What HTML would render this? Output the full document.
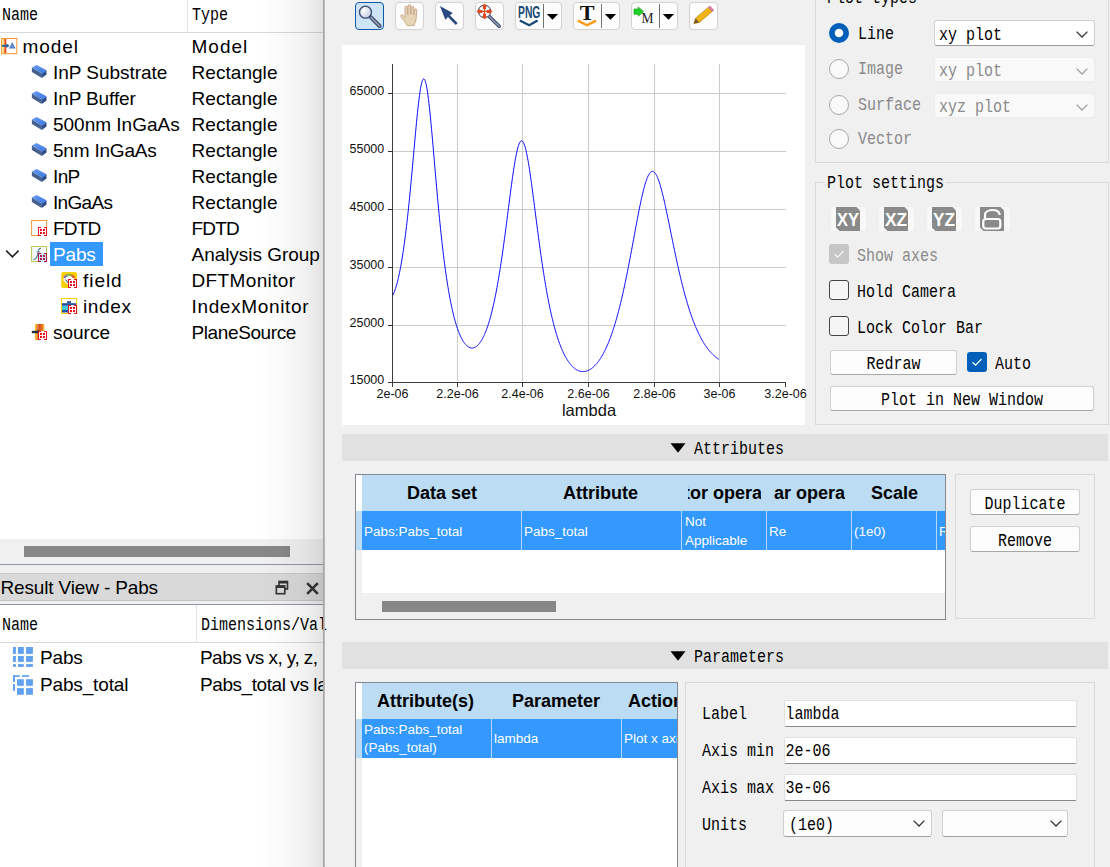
<!DOCTYPE html><html><head><meta charset="utf-8"><style>
html,body{margin:0;padding:0;}
body{width:1110px;height:867px;overflow:hidden;position:relative;background:#f0f0f0;}
.a{position:absolute;box-sizing:border-box;}
.t{white-space:pre;}
svg{position:absolute;overflow:visible;}
</style></head><body>
<div class="a" style="left:0px;top:0px;width:323px;height:539px;background:#fff"></div>
<div class="a" style="left:0px;top:32px;width:323px;height:1px;background:#d9d9d9"></div>
<div class="a" style="left:187px;top:0px;width:1px;height:32px;background:#e3e3e3"></div>
<div class="a t" style="left:2px;top:8.50px;font-family:'Liberation Mono', monospace;font-size:15px;line-height:15px;color:#000;transform:scaleY(1.18);transform-origin:0 11.50px;">Name</div>
<div class="a t" style="left:192px;top:8.50px;font-family:'Liberation Mono', monospace;font-size:15px;line-height:15px;color:#000;transform:scaleY(1.18);transform-origin:0 11.50px;">Type</div>
<div class="a t" style="left:22.5px;top:36.52px;font-family:'Liberation Sans', sans-serif;font-size:19px;line-height:19px;color:#000;letter-spacing:0.9px;">model</div>
<div class="a t" style="left:191.5px;top:36.52px;font-family:'Liberation Sans', sans-serif;font-size:19px;line-height:19px;color:#000;letter-spacing:0.9999999999999999px;">Model</div>
<svg style="left:1px;top:38px" width="16" height="16" viewBox="0 0 16 16"><rect x="0.6" y="0.5" width="15.2" height="15.2" fill="#fff" stroke="#f5962e" stroke-width="1"/><rect x="1.6" y="1" width="2" height="14.2" fill="#ffd86a"/><rect x="3.4" y="1" width="1.9" height="14.2" fill="#f0441a"/><path d="M1 7.8 L6.5 7.8" stroke="#1f5f9e" stroke-width="1.8"/><path d="M5.5 5.6 L8.6 7.8 L5.5 10Z" fill="#1f5f9e"/><path d="M7.9 10.4 L11.3 4 L14.7 10.4Z" fill="#5b86c8"/></svg>
<div class="a t" style="left:53px;top:62.52px;font-family:'Liberation Sans', sans-serif;font-size:19px;line-height:19px;color:#000;letter-spacing:-0.04166666666666666px;">InP Substrate</div>
<div class="a t" style="left:191.5px;top:62.52px;font-family:'Liberation Sans', sans-serif;font-size:19px;line-height:19px;color:#000;letter-spacing:0.05000000000000002px;">Rectangle</div>
<svg style="left:31px;top:64px" width="16" height="16" viewBox="0 0 16 16"><defs><linearGradient id="rtop" x1="0" y1="0" x2="1" y2="1"><stop offset="0" stop-color="#6a9cf2"/><stop offset="1" stop-color="#3a76e0"/></linearGradient></defs><path d="M0.9 3.5 L10.8 9.6 L10.8 13.9 L0.9 7.9 Z" fill="#46608f"/><path d="M10.8 9.6 L15.5 6.2 L15.5 10.4 L10.8 13.9 Z" fill="#2c4c8c"/><path d="M0.9 3.5 L5.6 1 L15.5 6.2 L10.8 9.6 Z" fill="url(#rtop)"/></svg>
<div class="a t" style="left:53px;top:88.52px;font-family:'Liberation Sans', sans-serif;font-size:19px;line-height:19px;color:#000;letter-spacing:-0.10555555555555554px;">InP Buffer</div>
<div class="a t" style="left:191.5px;top:88.52px;font-family:'Liberation Sans', sans-serif;font-size:19px;line-height:19px;color:#000;letter-spacing:0.05000000000000002px;">Rectangle</div>
<svg style="left:31px;top:90px" width="16" height="16" viewBox="0 0 16 16"><defs><linearGradient id="rtop" x1="0" y1="0" x2="1" y2="1"><stop offset="0" stop-color="#6a9cf2"/><stop offset="1" stop-color="#3a76e0"/></linearGradient></defs><path d="M0.9 3.5 L10.8 9.6 L10.8 13.9 L0.9 7.9 Z" fill="#46608f"/><path d="M10.8 9.6 L15.5 6.2 L15.5 10.4 L10.8 13.9 Z" fill="#2c4c8c"/><path d="M0.9 3.5 L5.6 1 L15.5 6.2 L10.8 9.6 Z" fill="url(#rtop)"/></svg>
<div class="a t" style="left:53px;top:114.52px;font-family:'Liberation Sans', sans-serif;font-size:19px;line-height:19px;color:#000;letter-spacing:-0.004545454545454519px;">500nm InGaAs</div>
<div class="a t" style="left:191.5px;top:114.52px;font-family:'Liberation Sans', sans-serif;font-size:19px;line-height:19px;color:#000;letter-spacing:0.05000000000000002px;">Rectangle</div>
<svg style="left:31px;top:116px" width="16" height="16" viewBox="0 0 16 16"><defs><linearGradient id="rtop" x1="0" y1="0" x2="1" y2="1"><stop offset="0" stop-color="#6a9cf2"/><stop offset="1" stop-color="#3a76e0"/></linearGradient></defs><path d="M0.9 3.5 L10.8 9.6 L10.8 13.9 L0.9 7.9 Z" fill="#46608f"/><path d="M10.8 9.6 L15.5 6.2 L15.5 10.4 L10.8 13.9 Z" fill="#2c4c8c"/><path d="M0.9 3.5 L5.6 1 L15.5 6.2 L10.8 9.6 Z" fill="url(#rtop)"/></svg>
<div class="a t" style="left:53px;top:140.52px;font-family:'Liberation Sans', sans-serif;font-size:19px;line-height:19px;color:#000;letter-spacing:-0.20555555555555555px;">5nm InGaAs</div>
<div class="a t" style="left:191.5px;top:140.52px;font-family:'Liberation Sans', sans-serif;font-size:19px;line-height:19px;color:#000;letter-spacing:0.05000000000000002px;">Rectangle</div>
<svg style="left:31px;top:142px" width="16" height="16" viewBox="0 0 16 16"><defs><linearGradient id="rtop" x1="0" y1="0" x2="1" y2="1"><stop offset="0" stop-color="#6a9cf2"/><stop offset="1" stop-color="#3a76e0"/></linearGradient></defs><path d="M0.9 3.5 L10.8 9.6 L10.8 13.9 L0.9 7.9 Z" fill="#46608f"/><path d="M10.8 9.6 L15.5 6.2 L15.5 10.4 L10.8 13.9 Z" fill="#2c4c8c"/><path d="M0.9 3.5 L5.6 1 L15.5 6.2 L10.8 9.6 Z" fill="url(#rtop)"/></svg>
<div class="a t" style="left:53px;top:166.52px;font-family:'Liberation Sans', sans-serif;font-size:19px;line-height:19px;color:#000;letter-spacing:-0.65px;">InP</div>
<div class="a t" style="left:191.5px;top:166.52px;font-family:'Liberation Sans', sans-serif;font-size:19px;line-height:19px;color:#000;letter-spacing:0.05000000000000002px;">Rectangle</div>
<svg style="left:31px;top:168px" width="16" height="16" viewBox="0 0 16 16"><defs><linearGradient id="rtop" x1="0" y1="0" x2="1" y2="1"><stop offset="0" stop-color="#6a9cf2"/><stop offset="1" stop-color="#3a76e0"/></linearGradient></defs><path d="M0.9 3.5 L10.8 9.6 L10.8 13.9 L0.9 7.9 Z" fill="#46608f"/><path d="M10.8 9.6 L15.5 6.2 L15.5 10.4 L10.8 13.9 Z" fill="#2c4c8c"/><path d="M0.9 3.5 L5.6 1 L15.5 6.2 L10.8 9.6 Z" fill="url(#rtop)"/></svg>
<div class="a t" style="left:53px;top:192.52px;font-family:'Liberation Sans', sans-serif;font-size:19px;line-height:19px;color:#000;letter-spacing:-0.67px;">InGaAs</div>
<div class="a t" style="left:191.5px;top:192.52px;font-family:'Liberation Sans', sans-serif;font-size:19px;line-height:19px;color:#000;letter-spacing:0.05000000000000002px;">Rectangle</div>
<svg style="left:31px;top:194px" width="16" height="16" viewBox="0 0 16 16"><defs><linearGradient id="rtop" x1="0" y1="0" x2="1" y2="1"><stop offset="0" stop-color="#6a9cf2"/><stop offset="1" stop-color="#3a76e0"/></linearGradient></defs><path d="M0.9 3.5 L10.8 9.6 L10.8 13.9 L0.9 7.9 Z" fill="#46608f"/><path d="M10.8 9.6 L15.5 6.2 L15.5 10.4 L10.8 13.9 Z" fill="#2c4c8c"/><path d="M0.9 3.5 L5.6 1 L15.5 6.2 L10.8 9.6 Z" fill="url(#rtop)"/></svg>
<div class="a t" style="left:53px;top:218.52px;font-family:'Liberation Sans', sans-serif;font-size:19px;line-height:19px;color:#000;letter-spacing:-0.8166666666666667px;">FDTD</div>
<div class="a t" style="left:191.5px;top:218.52px;font-family:'Liberation Sans', sans-serif;font-size:19px;line-height:19px;color:#000;letter-spacing:-0.8166666666666667px;">FDTD</div>
<svg style="left:31px;top:220px" width="16" height="16" viewBox="0 0 16 16"><rect x="0.6" y="0.5" width="15" height="15" fill="#fff" stroke="#ff9838" stroke-width="1"/><g shape-rendering="crispEdges"><rect x="7" y="7" width="9" height="9" fill="#fff"/><rect x="7" y="7" width="1" height="9" fill="#e8101e"/><rect x="7" y="7" width="3" height="1" fill="#e8101e"/><rect x="7" y="15" width="3" height="1" fill="#e8101e"/><rect x="15" y="7" width="1" height="9" fill="#e8101e"/><rect x="13" y="7" width="3" height="1" fill="#e8101e"/><rect x="13" y="15" width="3" height="1" fill="#e8101e"/><rect x="9" y="9" width="2" height="2" fill="#e8101e"/><rect x="12" y="9" width="2" height="2" fill="#e8101e"/><rect x="9" y="12" width="2" height="2" fill="#e8101e"/><rect x="12" y="12" width="2" height="2" fill="#e8101e"/></g></svg>
<div class="a" style="left:50px;top:242px;width:53px;height:24px;background:#3399ff"></div>
<div class="a t" style="left:53px;top:244.52px;font-family:'Liberation Sans', sans-serif;font-size:19px;line-height:19px;color:#fff;letter-spacing:-0.15px;">Pabs</div>
<div class="a t" style="left:191.5px;top:244.52px;font-family:'Liberation Sans', sans-serif;font-size:19px;line-height:19px;color:#000;letter-spacing:-0.04230769230769231px;">Analysis Group</div>
<svg style="left:31px;top:246px" width="16" height="16" viewBox="0 0 16 16"><rect x="0.6" y="0.6" width="15" height="14.8" fill="#fff" stroke="#b8c048" stroke-width="1"/><path d="M10 2.6 C8.2 1.8 7.4 3.5 7 6.5 C6.5 10 6 13.2 2.5 13.6" fill="none" stroke="#5a7ea4" stroke-width="1.1"/><path d="M5.5 6 L9.5 6" stroke="#5a7ea4" stroke-width="0.9"/><g shape-rendering="crispEdges"><rect x="7" y="7" width="9" height="9" fill="#c6e4fa"/><rect x="7" y="7" width="1" height="9" fill="#b01c40"/><rect x="7" y="7" width="3" height="1" fill="#b01c40"/><rect x="7" y="15" width="3" height="1" fill="#b01c40"/><rect x="15" y="7" width="1" height="9" fill="#b01c40"/><rect x="13" y="7" width="3" height="1" fill="#b01c40"/><rect x="13" y="15" width="3" height="1" fill="#b01c40"/><rect x="9" y="9" width="2" height="2" fill="#b01c40"/><rect x="12" y="9" width="2" height="2" fill="#b01c40"/><rect x="9" y="12" width="2" height="2" fill="#b01c40"/><rect x="12" y="12" width="2" height="2" fill="#b01c40"/></g></svg>
<div class="a t" style="left:83px;top:270.52px;font-family:'Liberation Sans', sans-serif;font-size:19px;line-height:19px;color:#000;letter-spacing:0.9500000000000001px;">field</div>
<div class="a t" style="left:191.5px;top:270.52px;font-family:'Liberation Sans', sans-serif;font-size:19px;line-height:19px;color:#000;letter-spacing:0.36111111111111105px;">DFTMonitor</div>
<svg style="left:61px;top:272px" width="16" height="16" viewBox="0 0 16 16"><defs><linearGradient id="rb" x1="0" x2="1"><stop offset="0" stop-color="#8a5cd0"/><stop offset="0.5" stop-color="#8ad040"/><stop offset="1" stop-color="#f04020"/></linearGradient></defs><rect x="0.2" y="0" width="15.8" height="16" rx="2" fill="#ffd000"/><path d="M2.2 8.5 A6 6 0 0 1 14.2 8.5 L10 12 L6 12 Z" fill="#fff"/><path d="M3.2 6 A5.5 5.5 0 0 1 13.2 6" fill="none" stroke="url(#rb)" stroke-width="2.2"/><path d="M4.5 7.5 L8 12" stroke="#334" stroke-width="1"/><g shape-rendering="crispEdges"><rect x="7" y="7" width="9" height="9" fill="#fff"/><rect x="7" y="7" width="1" height="9" fill="#e8101e"/><rect x="7" y="7" width="3" height="1" fill="#e8101e"/><rect x="7" y="15" width="3" height="1" fill="#e8101e"/><rect x="15" y="7" width="1" height="9" fill="#e8101e"/><rect x="13" y="7" width="3" height="1" fill="#e8101e"/><rect x="13" y="15" width="3" height="1" fill="#e8101e"/><rect x="9" y="9" width="2" height="2" fill="#e8101e"/><rect x="12" y="9" width="2" height="2" fill="#e8101e"/><rect x="9" y="12" width="2" height="2" fill="#e8101e"/><rect x="12" y="12" width="2" height="2" fill="#e8101e"/></g></svg>
<div class="a t" style="left:83px;top:296.52px;font-family:'Liberation Sans', sans-serif;font-size:19px;line-height:19px;color:#000;letter-spacing:0.65px;">index</div>
<div class="a t" style="left:191.5px;top:296.52px;font-family:'Liberation Sans', sans-serif;font-size:19px;line-height:19px;color:#000;letter-spacing:0.65px;">IndexMonitor</div>
<svg style="left:61px;top:298px" width="16" height="16" viewBox="0 0 16 16"><rect x="0.5" y="0.5" width="15.2" height="15" fill="#fff" stroke="#ffd000" stroke-width="1"/><rect x="1" y="5.2" width="14.2" height="2.6" fill="#2850a0"/><rect x="1" y="7.8" width="14.2" height="4.1" fill="#3cc8d4"/><rect x="1" y="11.9" width="14.2" height="2.6" fill="#2850a0"/><rect x="6" y="3.2" width="4" height="2" fill="#2850a0"/><g shape-rendering="crispEdges"><rect x="7" y="7" width="9" height="9" fill="#fff"/><rect x="7" y="7" width="1" height="9" fill="#e8101e"/><rect x="7" y="7" width="3" height="1" fill="#e8101e"/><rect x="7" y="15" width="3" height="1" fill="#e8101e"/><rect x="15" y="7" width="1" height="9" fill="#e8101e"/><rect x="13" y="7" width="3" height="1" fill="#e8101e"/><rect x="13" y="15" width="3" height="1" fill="#e8101e"/><rect x="9" y="9" width="2" height="2" fill="#e8101e"/><rect x="12" y="9" width="2" height="2" fill="#e8101e"/><rect x="9" y="12" width="2" height="2" fill="#e8101e"/><rect x="12" y="12" width="2" height="2" fill="#e8101e"/></g></svg>
<div class="a t" style="left:53px;top:322.52px;font-family:'Liberation Sans', sans-serif;font-size:19px;line-height:19px;color:#000;letter-spacing:-0.010000000000000009px;">source</div>
<div class="a t" style="left:191.5px;top:322.52px;font-family:'Liberation Sans', sans-serif;font-size:19px;line-height:19px;color:#000;letter-spacing:-0.39px;">PlaneSource</div>
<svg style="left:31px;top:324px" width="16" height="16" viewBox="0 0 16 16"><defs><linearGradient id="sg" x1="0" x2="1"><stop offset="0" stop-color="#ffd020"/><stop offset="0.25" stop-color="#e88a40"/><stop offset="0.5" stop-color="#d85018"/><stop offset="0.8" stop-color="#e87a30"/><stop offset="1" stop-color="#ffd020"/></linearGradient></defs><rect x="3.9" y="0" width="9.4" height="16" fill="url(#sg)"/><path d="M0.8 8 L8 8" stroke="#223040" stroke-width="2.4"/><path d="M6.5 5.5 L9.5 7.5 L6.5 9.5Z" fill="#223040"/><g shape-rendering="crispEdges"><rect x="7" y="7" width="9" height="9" fill="#fff"/><rect x="7" y="7" width="1" height="9" fill="#e8101e"/><rect x="7" y="7" width="3" height="1" fill="#e8101e"/><rect x="7" y="15" width="3" height="1" fill="#e8101e"/><rect x="15" y="7" width="1" height="9" fill="#e8101e"/><rect x="13" y="7" width="3" height="1" fill="#e8101e"/><rect x="13" y="15" width="3" height="1" fill="#e8101e"/><rect x="9" y="9" width="2" height="2" fill="#e8101e"/><rect x="12" y="9" width="2" height="2" fill="#e8101e"/><rect x="9" y="12" width="2" height="2" fill="#e8101e"/><rect x="12" y="12" width="2" height="2" fill="#e8101e"/></g></svg>
<svg style="left:5px;top:249px" width="15" height="10" viewBox="0 0 15 10"><path d="M1.2 1.6 L7.4 7.8 L13.6 1.6" fill="none" stroke="#222" stroke-width="1.6"/></svg>
<div class="a" style="left:0px;top:539px;width:323px;height:25px;background:#f0f0f0"></div>
<div class="a" style="left:24px;top:546px;width:266px;height:11px;background:#878787"></div>
<div class="a" style="left:0px;top:564px;width:323px;height:1px;background:#8d97a3"></div>
<div class="a" style="left:0px;top:565px;width:323px;height:8px;background:#f0f0f0"></div>
<div class="a" style="left:0px;top:573px;width:323px;height:1px;background:#cacaca"></div>
<div class="a" style="left:0px;top:574px;width:323px;height:26px;background:#d9d9d9"></div>
<div class="a" style="left:0px;top:600px;width:323px;height:1px;background:#c4c4c4"></div>
<div class="a" style="left:0px;top:601px;width:323px;height:3px;background:#f0f0f0"></div>
<div class="a" style="left:0px;top:604px;width:323px;height:1px;background:#8d97a3"></div>
<div class="a t" style="left:0.5px;top:578.32px;font-family:'Liberation Sans', sans-serif;font-size:19px;line-height:19px;color:#000;letter-spacing:-0.15px;">Result View - Pabs</div>
<svg style="left:275px;top:580px" width="14" height="15" viewBox="0 0 14 15"><rect x="4" y="1.5" width="8.5" height="7.5" fill="none" stroke="#333" stroke-width="1.6"/><rect x="4" y="1" width="9" height="2.5" fill="#333"/><rect x="1.3" y="6" width="8.5" height="7.7" fill="#d9d9d9" stroke="#333" stroke-width="1.6"/><rect x="1" y="5.5" width="9" height="2.5" fill="#333"/></svg>
<svg style="left:306px;top:582px" width="13" height="13" viewBox="0 0 13 13"><path d="M1.2 1.2 L11.8 11.8 M11.8 1.2 L1.2 11.8" stroke="#333" stroke-width="2.5"/></svg>
<div class="a" style="left:0px;top:605px;width:323px;height:262px;background:#fff"></div>
<div class="a" style="left:0px;top:642px;width:323px;height:1px;background:#d9d9d9"></div>
<div class="a" style="left:196px;top:605px;width:1px;height:37px;background:#e3e3e3"></div>
<div class="a t" style="left:2px;top:618.50px;font-family:'Liberation Mono', monospace;font-size:15px;line-height:15px;color:#000;transform:scaleY(1.18);transform-origin:0 11.50px;">Name</div>
<div class="a t" style="left:201px;top:618.50px;font-family:'Liberation Mono', monospace;font-size:15px;line-height:15px;color:#000;transform:scaleY(1.18);transform-origin:0 11.50px;">Dimensions/Val</div>
<div class="a t" style="left:40px;top:647.52px;font-family:'Liberation Sans', sans-serif;font-size:19px;line-height:19px;color:#000;letter-spacing:-0.15px;">Pabs</div>
<div class="a" style="left:0px;top:647.52px;width:323px;height:30.4px;overflow:hidden"><div class="a t" style="left:200px;top:0px;font-family:'Liberation Sans', sans-serif;font-size:19px;line-height:19px;color:#000;letter-spacing:-0.55px;">Pabs vs x, y, z, lambda</div></div>
<div class="a t" style="left:40px;top:675.22px;font-family:'Liberation Sans', sans-serif;font-size:19px;line-height:19px;color:#000;letter-spacing:-0.15px;">Pabs_total</div>
<div class="a" style="left:0px;top:675.22px;width:323px;height:30.4px;overflow:hidden"><div class="a t" style="left:200px;top:0px;font-family:'Liberation Sans', sans-serif;font-size:19px;line-height:19px;color:#000;letter-spacing:-0.42894736842105263px;">Pabs_total vs lambda</div></div>
<svg style="left:13px;top:647px" width="20" height="20" viewBox="0 0 20 20"><rect x="0" y="0" width="2.9" height="6.9" fill="#62a0f0"/><rect x="0" y="9" width="2.9" height="5.9" fill="#62a0f0"/><rect x="0" y="17.1" width="2.9" height="2.8" fill="#62a0f0"/><rect x="5" y="0" width="5.8" height="6.9" fill="#62a0f0"/><rect x="5" y="9" width="5.8" height="5.9" fill="#62a0f0"/><rect x="5" y="17.1" width="5.8" height="2.8" fill="#62a0f0"/><rect x="13.1" y="0" width="6.8" height="6.9" fill="#62a0f0"/><rect x="13.1" y="9" width="6.8" height="5.9" fill="#62a0f0"/><rect x="13.1" y="17.1" width="6.8" height="2.8" fill="#62a0f0"/></svg>
<svg style="left:13px;top:675px" width="20" height="20" viewBox="0 0 20 20"><rect x="0" y="0.2" width="6.9" height="1.7" fill="#62a0f0"/><rect x="9" y="0.2" width="7" height="1.7" fill="#62a0f0"/><rect x="0" y="0.2" width="2" height="6.7" fill="#62a0f0"/><rect x="0" y="9.1" width="2" height="6.8" fill="#62a0f0"/><rect x="4" y="4.2" width="6.8" height="6.6" fill="#62a0f0"/><rect x="13.1" y="4.2" width="6.8" height="6.6" fill="#62a0f0"/><rect x="4" y="13.1" width="6.8" height="6.7" fill="#62a0f0"/><rect x="13.1" y="13.1" width="6.8" height="6.7" fill="#62a0f0"/></svg>
<div class="a" style="left:258px;top:0px;width:65px;height:867px;background:linear-gradient(to right, rgba(0,0,0,0) 0%, rgba(0,0,0,0.018) 35%, rgba(0,0,0,0.05) 70%, rgba(0,0,0,0.11) 100%)"></div>
<div class="a" style="left:323px;top:0px;width:1px;height:867px;background:#a6a6a6"></div>
<div class="a" style="left:324px;top:0px;width:1px;height:867px;background:#b9b9b9"></div>
<div class="a" style="left:355px;top:2px;width:29px;height:28px;background:#cde4f7;border:1.4px solid #0a5aa8;border-radius:4px"></div>
<div class="a" style="left:395px;top:2px;width:29px;height:28px;background:#fdfdfd;border:1px solid #d2d2d2;border-radius:4px"></div>
<div class="a" style="left:435px;top:2px;width:29px;height:28px;background:#fdfdfd;border:1px solid #d2d2d2;border-radius:4px"></div>
<div class="a" style="left:475px;top:2px;width:29px;height:28px;background:#fdfdfd;border:1px solid #d2d2d2;border-radius:4px"></div>
<div class="a" style="left:515px;top:2px;width:47px;height:28px;background:#fdfdfd;border:1px solid #d2d2d2;border-radius:4px"></div>
<div class="a" style="left:573px;top:2px;width:47px;height:28px;background:#fdfdfd;border:1px solid #d2d2d2;border-radius:4px"></div>
<div class="a" style="left:631px;top:2px;width:47px;height:28px;background:#fdfdfd;border:1px solid #d2d2d2;border-radius:4px"></div>
<div class="a" style="left:689px;top:2px;width:29px;height:28px;background:#fdfdfd;border:1px solid #d2d2d2;border-radius:4px"></div>
<svg style="left:355px;top:2px" width="29" height="28" viewBox="0 0 29 28"><defs><radialGradient id="lg" cx="0.35" cy="0.35" r="0.75"><stop offset="0" stop-color="#ffffff"/><stop offset="1" stop-color="#c0c6dc"/></radialGradient></defs><path d="M16 15.4 L24.6 24" stroke="#3c4a6c" stroke-width="4" stroke-linecap="round"/><path d="M16 15.4 L24.6 24" stroke="#98a0b8" stroke-width="1.7" stroke-linecap="round"/><circle cx="10.5" cy="10.2" r="6" fill="url(#lg)" stroke="#3c4a70" stroke-width="1.3"/></svg><svg style="left:395px;top:2px" width="29" height="28" viewBox="0 0 29 28"><path d="M12.2 23.6 L9.5 19.5 L6 14.8 C5.2 13.6 6.6 12.2 7.8 13.2 L10 15.4 L10 5.6 C10 3.7 12.5 3.7 12.5 5.6 L12.8 12.5 L13 3.9 C13 2.2 15.8 2.2 15.8 3.9 L15.8 12.5 L16.2 5.8 C16.3 4 19 4 19 5.8 L18.8 13 L19 8.2 C19.2 6.5 21.9 6.6 21.8 8.4 L21.2 16 C21 19.5 19.5 21.5 19 23.6 Z" fill="#e6d5b6" stroke="#c4a284" stroke-width="0.9"/></svg><svg style="left:435px;top:2px" width="29" height="28" viewBox="0 0 29 28"><path d="M4.9 4.1 L17.8 11 L14.9 13.2 L22.6 21 L20.8 22.9 L13 15.1 L10.3 17.8 Z" fill="#2c4a82"/></svg><svg style="left:475px;top:2px" width="29" height="28" viewBox="0 0 29 28"><path d="M14 14.2 L24.2 24.2" stroke="#3c4a6c" stroke-width="3.6" stroke-linecap="round"/><path d="M14 14.2 L24.2 24.2" stroke="#98a0b8" stroke-width="1.5" stroke-linecap="round"/><circle cx="9.5" cy="9.4" r="6.3" fill="#f6f6fa" stroke="#3c4a70" stroke-width="1"/><path d="M9.5 1.4 L12.3 4.6 L11 4.6 L11 7.9 L14.3 7.9 L14.3 6.6 L17.5 9.4 L14.3 12.2 L14.3 10.9 L11 10.9 L11 14.2 L12.3 14.2 L9.5 17.4 L6.7 14.2 L8 14.2 L8 10.9 L4.7 10.9 L4.7 12.2 L1.5 9.4 L4.7 6.6 L4.7 7.9 L8 7.9 L8 4.6 L6.7 4.6 Z" fill="#d94a1e"/><rect x="7.3" y="7.2" width="1.6" height="1.6" fill="#fff"/><rect x="10.1" y="7.2" width="1.6" height="1.6" fill="#fff"/><rect x="7.3" y="10" width="1.6" height="1.6" fill="#fff"/><rect x="10.1" y="10" width="1.6" height="1.6" fill="#fff"/></svg><svg style="left:515px;top:2px" width="47" height="28" viewBox="0 0 47 28"><text x="3" y="16.3" font-family="Liberation Sans" font-size="16.5" font-weight="700" fill="#1a4a72" textLength="22.4" lengthAdjust="spacingAndGlyphs" style="font-stretch:condensed">PNG</text><path d="M4.8 18.4 L14.2 23.2 L22.6 18.4" fill="none" stroke="#1a4a72" stroke-width="2.3"/><rect x="28" y="2" width="1" height="24" fill="#707070"/><path d="M31.8 12 L43.1 12 L37.45 17.8Z" fill="#000"/></svg><svg style="left:573px;top:2px" width="47" height="28" viewBox="0 0 47 28"><text x="6.8" y="18.4" font-family="Liberation Serif" font-size="20.5" font-weight="700" fill="#111" textLength="14.8" lengthAdjust="spacingAndGlyphs">T</text><path d="M4.8 18.6 L14 23.2 L23.1 18.6" fill="none" stroke="#ff9a10" stroke-width="2.4"/><rect x="28" y="2" width="1" height="24" fill="#707070"/><path d="M31.8 12 L43.1 12 L37.45 17.8Z" fill="#000"/></svg><svg style="left:631px;top:2px" width="47" height="28" viewBox="0 0 47 28"><path d="M3 7 L7.2 7 L7.2 5 L12.6 9.6 L7.2 14.2 L7.2 12.2 L3 12.2 Z" fill="#22d22a" stroke="#14a018" stroke-width="0.7"/><text x="10.5" y="21.3" font-family="Liberation Serif" font-size="14" fill="#222" textLength="12" lengthAdjust="spacingAndGlyphs">M</text><rect x="28" y="2" width="1" height="24" fill="#707070"/><path d="M31.8 12 L43.1 12 L37.45 17.8Z" fill="#000"/></svg><svg style="left:689px;top:2px" width="29" height="28" viewBox="0 0 29 28"><path d="M4.8 21.6 L6.6 16.2 L19.4 5.2 L23.2 9.6 L10.4 20.4 Z" fill="#f2b414" stroke="#b88a10" stroke-width="0.7"/><path d="M19.4 5.2 L21 3.9 L24.8 8.2 L23.2 9.6 Z" fill="#e27ab0" stroke="#b86090" stroke-width="0.5"/><path d="M4.8 21.6 L6.6 16.2 L10.4 20.4 Z" fill="#7a5a2a"/></svg>
<div class="a" style="left:342px;top:45px;width:463px;height:380px;background:#fff"></div>
<svg style="left:0;top:0" width="1110" height="867"><rect x="457" y="64" width="1" height="318" fill="#cbcbcb"/><rect x="522" y="64" width="1" height="318" fill="#cbcbcb"/><rect x="588" y="64" width="1" height="318" fill="#cbcbcb"/><rect x="654" y="64" width="1" height="318" fill="#cbcbcb"/><rect x="719" y="64" width="1" height="318" fill="#cbcbcb"/><rect x="393" y="93" width="393" height="1" fill="#cbcbcb"/><rect x="388" y="93" width="4" height="1" fill="#333"/><rect x="393" y="151" width="393" height="1" fill="#cbcbcb"/><rect x="388" y="151" width="4" height="1" fill="#333"/><rect x="393" y="209" width="393" height="1" fill="#cbcbcb"/><rect x="388" y="209" width="4" height="1" fill="#333"/><rect x="393" y="267" width="393" height="1" fill="#cbcbcb"/><rect x="388" y="267" width="4" height="1" fill="#333"/><rect x="393" y="325" width="393" height="1" fill="#cbcbcb"/><rect x="388" y="325" width="4" height="1" fill="#333"/><rect x="392" y="64" width="1" height="319" fill="#3c3c3c"/><rect x="388" y="382" width="398" height="1" fill="#3c3c3c"/><rect x="392" y="383" width="1" height="4" fill="#3c3c3c"/><rect x="457" y="383" width="1" height="4" fill="#3c3c3c"/><rect x="522" y="383" width="1" height="4" fill="#3c3c3c"/><rect x="588" y="383" width="1" height="4" fill="#3c3c3c"/><rect x="654" y="383" width="1" height="4" fill="#3c3c3c"/><rect x="719" y="383" width="1" height="4" fill="#3c3c3c"/><rect x="785" y="383" width="1" height="4" fill="#3c3c3c"/><path d="M393.00 295.14 L393.50 294.00 L394.00 292.77 L394.50 291.45 L395.00 290.03 L395.50 288.52 L396.00 286.91 L396.50 285.20 L397.00 283.39 L397.50 281.48 L398.00 279.45 L398.50 277.32 L399.00 275.07 L399.50 272.71 L400.00 270.23 L400.50 267.63 L401.00 264.91 L401.50 262.07 L402.00 259.09 L402.50 255.99 L403.00 252.75 L403.50 249.38 L404.00 245.88 L404.50 242.24 L405.00 238.46 L405.50 234.54 L406.00 230.48 L406.50 226.29 L407.00 221.95 L407.50 217.48 L408.00 212.88 L408.50 208.15 L409.00 203.28 L409.50 198.30 L410.00 193.21 L410.50 188.01 L411.00 182.71 L411.50 177.33 L412.00 171.87 L412.50 166.36 L413.00 160.80 L413.50 155.23 L414.00 149.64 L414.50 144.08 L415.00 138.55 L415.50 133.10 L416.00 127.73 L416.50 122.49 L417.00 117.41 L417.50 112.50 L418.00 107.82 L418.50 103.38 L419.00 99.22 L419.50 95.36 L420.00 91.85 L420.50 88.71 L421.00 85.97 L421.50 83.64 L422.00 81.75 L422.50 80.32 L423.00 79.36 L423.50 78.89 L424.00 78.89 L424.50 79.38 L425.00 80.36 L425.50 81.81 L426.00 83.72 L426.50 86.07 L427.00 88.86 L427.50 92.04 L428.00 95.61 L428.50 99.53 L429.00 103.76 L429.50 108.29 L430.00 113.08 L430.50 118.10 L431.00 123.32 L431.50 128.71 L432.00 134.24 L432.50 139.88 L433.00 145.60 L433.50 151.38 L434.00 157.20 L434.50 163.03 L435.00 168.85 L435.50 174.65 L436.00 180.40 L436.50 186.10 L437.00 191.74 L437.50 197.29 L438.00 202.75 L438.50 208.12 L439.00 213.38 L439.50 218.52 L440.00 223.56 L440.50 228.47 L441.00 233.26 L441.50 237.92 L442.00 242.46 L442.50 246.88 L443.00 251.16 L443.50 255.32 L444.00 259.36 L444.50 263.27 L445.00 267.06 L445.50 270.73 L446.00 274.28 L446.50 277.71 L447.00 281.03 L447.50 284.23 L448.00 287.33 L448.50 290.32 L449.00 293.20 L449.50 295.99 L450.00 298.67 L450.50 301.26 L451.00 303.75 L451.50 306.15 L452.00 308.46 L452.50 310.68 L453.00 312.82 L453.50 314.88 L454.00 316.86 L454.50 318.76 L455.00 320.58 L455.50 322.33 L456.00 324.01 L456.50 325.62 L457.00 327.16 L457.50 328.64 L458.00 330.05 L458.50 331.39 L459.00 332.68 L459.50 333.90 L460.00 335.07 L460.50 336.18 L461.00 337.23 L461.50 338.23 L462.00 339.18 L462.50 340.07 L463.00 340.91 L463.50 341.70 L464.00 342.44 L464.50 343.13 L465.00 343.78 L465.50 344.37 L466.00 344.92 L466.50 345.43 L467.00 345.88 L467.50 346.30 L468.00 346.67 L468.50 346.99 L469.00 347.27 L469.50 347.51 L470.00 347.70 L470.50 347.85 L471.00 347.96 L471.50 348.03 L472.00 348.05 L472.50 348.04 L473.00 347.98 L473.50 347.87 L474.00 347.73 L474.50 347.54 L475.00 347.31 L475.50 347.04 L476.00 346.73 L476.50 346.37 L477.00 345.97 L477.50 345.53 L478.00 345.04 L478.50 344.51 L479.00 343.93 L479.50 343.31 L480.00 342.64 L480.50 341.93 L481.00 341.17 L481.50 340.36 L482.00 339.51 L482.50 338.60 L483.00 337.65 L483.50 336.64 L484.00 335.59 L484.50 334.48 L485.00 333.33 L485.50 332.12 L486.00 330.85 L486.50 329.53 L487.00 328.15 L487.50 326.72 L488.00 325.23 L488.50 323.68 L489.00 322.07 L489.50 320.40 L490.00 318.66 L490.50 316.87 L491.00 315.01 L491.50 313.09 L492.00 311.10 L492.50 309.04 L493.00 306.92 L493.50 304.72 L494.00 302.46 L494.50 300.13 L495.00 297.72 L495.50 295.25 L496.00 292.70 L496.50 290.08 L497.00 287.39 L497.50 284.62 L498.00 281.78 L498.50 278.87 L499.00 275.88 L499.50 272.82 L500.00 269.69 L500.50 266.49 L501.00 263.22 L501.50 259.88 L502.00 256.47 L502.50 253.00 L503.00 249.47 L503.50 245.88 L504.00 242.23 L504.50 238.53 L505.00 234.79 L505.50 231.00 L506.00 227.17 L506.50 223.32 L507.00 219.44 L507.50 215.54 L508.00 211.62 L508.50 207.71 L509.00 203.80 L509.50 199.91 L510.00 196.04 L510.50 192.21 L511.00 188.43 L511.50 184.70 L512.00 181.04 L512.50 177.47 L513.00 173.98 L513.50 170.61 L514.00 167.35 L514.50 164.23 L515.00 161.25 L515.50 158.43 L516.00 155.78 L516.50 153.32 L517.00 151.04 L517.50 148.97 L518.00 147.12 L518.50 145.49 L519.00 144.09 L519.50 142.93 L520.00 142.01 L520.50 141.34 L521.00 140.92 L521.50 140.76 L522.00 140.86 L522.50 141.21 L523.00 141.81 L523.50 142.66 L524.00 143.75 L524.50 145.09 L525.00 146.65 L525.50 148.44 L526.00 150.45 L526.50 152.66 L527.00 155.06 L527.50 157.65 L528.00 160.41 L528.50 163.32 L529.00 166.39 L529.50 169.59 L530.00 172.91 L530.50 176.34 L531.00 179.87 L531.50 183.49 L532.00 187.18 L532.50 190.93 L533.00 194.73 L533.50 198.57 L534.00 202.44 L534.50 206.33 L535.00 210.24 L535.50 214.15 L536.00 218.05 L536.50 221.94 L537.00 225.82 L537.50 229.67 L538.00 233.49 L538.50 237.27 L539.00 241.01 L539.50 244.71 L540.00 248.36 L540.50 251.96 L541.00 255.50 L541.50 258.99 L542.00 262.42 L542.50 265.79 L543.00 269.09 L543.50 272.33 L544.00 275.51 L544.50 278.62 L545.00 281.67 L545.50 284.65 L546.00 287.56 L546.50 290.41 L547.00 293.19 L547.50 295.90 L548.00 298.55 L548.50 301.13 L549.00 303.66 L549.50 306.11 L550.00 308.51 L550.50 310.84 L551.00 313.11 L551.50 315.32 L552.00 317.47 L552.50 319.56 L553.00 321.60 L553.50 323.58 L554.00 325.50 L554.50 327.38 L555.00 329.19 L555.50 330.96 L556.00 332.67 L556.50 334.34 L557.00 335.95 L557.50 337.52 L558.00 339.04 L558.50 340.52 L559.00 341.95 L559.50 343.33 L560.00 344.67 L560.50 345.97 L561.00 347.23 L561.50 348.45 L562.00 349.63 L562.50 350.77 L563.00 351.87 L563.50 352.94 L564.00 353.97 L564.50 354.96 L565.00 355.92 L565.50 356.84 L566.00 357.73 L566.50 358.59 L567.00 359.41 L567.50 360.21 L568.00 360.97 L568.50 361.70 L569.00 362.40 L569.50 363.08 L570.00 363.72 L570.50 364.33 L571.00 364.92 L571.50 365.48 L572.00 366.01 L572.50 366.52 L573.00 367.00 L573.50 367.45 L574.00 367.88 L574.50 368.28 L575.00 368.66 L575.50 369.02 L576.00 369.35 L576.50 369.65 L577.00 369.93 L577.50 370.19 L578.00 370.43 L578.50 370.64 L579.00 370.83 L579.50 371.00 L580.00 371.14 L580.50 371.27 L581.00 371.37 L581.50 371.44 L582.00 371.50 L582.50 371.54 L583.00 371.55 L583.50 371.54 L584.00 371.51 L584.50 371.46 L585.00 371.39 L585.50 371.30 L586.00 371.18 L586.50 371.05 L587.00 370.89 L587.50 370.72 L588.00 370.52 L588.50 370.30 L589.00 370.06 L589.50 369.79 L590.00 369.51 L590.50 369.20 L591.00 368.88 L591.50 368.53 L592.00 368.16 L592.50 367.77 L593.00 367.35 L593.50 366.91 L594.00 366.46 L594.50 365.98 L595.00 365.47 L595.50 364.95 L596.00 364.40 L596.50 363.82 L597.00 363.23 L597.50 362.61 L598.00 361.97 L598.50 361.30 L599.00 360.61 L599.50 359.89 L600.00 359.15 L600.50 358.39 L601.00 357.60 L601.50 356.78 L602.00 355.94 L602.50 355.07 L603.00 354.17 L603.50 353.25 L604.00 352.30 L604.50 351.33 L605.00 350.32 L605.50 349.29 L606.00 348.23 L606.50 347.14 L607.00 346.02 L607.50 344.87 L608.00 343.69 L608.50 342.48 L609.00 341.24 L609.50 339.97 L610.00 338.67 L610.50 337.33 L611.00 335.97 L611.50 334.57 L612.00 333.14 L612.50 331.67 L613.00 330.17 L613.50 328.64 L614.00 327.07 L614.50 325.47 L615.00 323.84 L615.50 322.16 L616.00 320.46 L616.50 318.72 L617.00 316.94 L617.50 315.12 L618.00 313.27 L618.50 311.39 L619.00 309.46 L619.50 307.50 L620.00 305.51 L620.50 303.48 L621.00 301.41 L621.50 299.30 L622.00 297.16 L622.50 294.98 L623.00 292.77 L623.50 290.53 L624.00 288.24 L624.50 285.93 L625.00 283.58 L625.50 281.20 L626.00 278.79 L626.50 276.34 L627.00 273.87 L627.50 271.37 L628.00 268.84 L628.50 266.28 L629.00 263.70 L629.50 261.10 L630.00 258.47 L630.50 255.83 L631.00 253.17 L631.50 250.49 L632.00 247.80 L632.50 245.11 L633.00 242.40 L633.50 239.69 L634.00 236.98 L634.50 234.27 L635.00 231.56 L635.50 228.86 L636.00 226.18 L636.50 223.50 L637.00 220.85 L637.50 218.22 L638.00 215.62 L638.50 213.05 L639.00 210.52 L639.50 208.03 L640.00 205.58 L640.50 203.18 L641.00 200.83 L641.50 198.55 L642.00 196.32 L642.50 194.17 L643.00 192.08 L643.50 190.08 L644.00 188.15 L644.50 186.31 L645.00 184.56 L645.50 182.91 L646.00 181.35 L646.50 179.89 L647.00 178.54 L647.50 177.30 L648.00 176.17 L648.50 175.15 L649.00 174.25 L649.50 173.47 L650.00 172.81 L650.50 172.27 L651.00 171.85 L651.50 171.56 L652.00 171.39 L652.50 171.35 L653.00 171.43 L653.50 171.63 L654.00 171.95 L654.50 172.40 L655.00 172.96 L655.50 173.64 L656.00 174.44 L656.50 175.35 L657.00 176.37 L657.50 177.49 L658.00 178.72 L658.50 180.04 L659.00 181.46 L659.50 182.98 L660.00 184.58 L660.50 186.26 L661.00 188.03 L661.50 189.86 L662.00 191.77 L662.50 193.75 L663.00 195.78 L663.50 197.88 L664.00 200.02 L664.50 202.21 L665.00 204.45 L665.50 206.73 L666.00 209.04 L666.50 211.39 L667.00 213.76 L667.50 216.16 L668.00 218.57 L668.50 221.00 L669.00 223.45 L669.50 225.90 L670.00 228.37 L670.50 230.83 L671.00 233.30 L671.50 235.76 L672.00 238.22 L672.50 240.67 L673.00 243.11 L673.50 245.54 L674.00 247.96 L674.50 250.36 L675.00 252.74 L675.50 255.11 L676.00 257.45 L676.50 259.78 L677.00 262.08 L677.50 264.35 L678.00 266.60 L678.50 268.83 L679.00 271.02 L679.50 273.19 L680.00 275.33 L680.50 277.44 L681.00 279.52 L681.50 281.58 L682.00 283.60 L682.50 285.59 L683.00 287.55 L683.50 289.47 L684.00 291.37 L684.50 293.23 L685.00 295.07 L685.50 296.87 L686.00 298.64 L686.50 300.38 L687.00 302.09 L687.50 303.76 L688.00 305.41 L688.50 307.02 L689.00 308.60 L689.50 310.16 L690.00 311.68 L690.50 313.17 L691.00 314.63 L691.50 316.07 L692.00 317.47 L692.50 318.85 L693.00 320.19 L693.50 321.51 L694.00 322.80 L694.50 324.07 L695.00 325.31 L695.50 326.52 L696.00 327.70 L696.50 328.86 L697.00 329.99 L697.50 331.09 L698.00 332.18 L698.50 333.23 L699.00 334.27 L699.50 335.28 L700.00 336.26 L700.50 337.22 L701.00 338.16 L701.50 339.08 L702.00 339.98 L702.50 340.85 L703.00 341.70 L703.50 342.53 L704.00 343.34 L704.50 344.13 L705.00 344.90 L705.50 345.65 L706.00 346.38 L706.50 347.09 L707.00 347.78 L707.50 348.45 L708.00 349.11 L708.50 349.75 L709.00 350.36 L709.50 350.96 L710.00 351.55 L710.50 352.11 L711.00 352.66 L711.50 353.20 L712.00 353.71 L712.50 354.22 L713.00 354.70 L713.50 355.17 L714.00 355.62 L714.50 356.06 L715.00 356.49 L715.50 356.89 L716.00 357.29 L716.50 357.67 L717.00 358.03 L717.50 358.39 L718.00 358.72 L718.50 359.05 L719.00 359.36" fill="none" stroke="#0000ff" stroke-width="0.95"/></svg><div class="a t" style="left:349.5px;top:83.2px;font-family:'Liberation Sans';font-size:12.5px;line-height:16px;color:#111">65000</div><div class="a t" style="left:349.5px;top:141.2px;font-family:'Liberation Sans';font-size:12.5px;line-height:16px;color:#111">55000</div><div class="a t" style="left:349.5px;top:199.2px;font-family:'Liberation Sans';font-size:12.5px;line-height:16px;color:#111">45000</div><div class="a t" style="left:349.5px;top:257.2px;font-family:'Liberation Sans';font-size:12.5px;line-height:16px;color:#111">35000</div><div class="a t" style="left:349.5px;top:315.2px;font-family:'Liberation Sans';font-size:12.5px;line-height:16px;color:#111">25000</div><div class="a t" style="left:349.5px;top:372.2px;font-family:'Liberation Sans';font-size:12.5px;line-height:16px;color:#111">15000</div><div class="a t" style="left:332.5px;width:120px;text-align:center;top:386px;font-family:'Liberation Sans';font-size:12.5px;line-height:16px;color:#111">2e-06</div><div class="a t" style="left:397.5px;width:120px;text-align:center;top:386px;font-family:'Liberation Sans';font-size:12.5px;line-height:16px;color:#111">2.2e-06</div><div class="a t" style="left:462.5px;width:120px;text-align:center;top:386px;font-family:'Liberation Sans';font-size:12.5px;line-height:16px;color:#111">2.4e-06</div><div class="a t" style="left:528.5px;width:120px;text-align:center;top:386px;font-family:'Liberation Sans';font-size:12.5px;line-height:16px;color:#111">2.6e-06</div><div class="a t" style="left:594.5px;width:120px;text-align:center;top:386px;font-family:'Liberation Sans';font-size:12.5px;line-height:16px;color:#111">2.8e-06</div><div class="a t" style="left:659.5px;width:120px;text-align:center;top:386px;font-family:'Liberation Sans';font-size:12.5px;line-height:16px;color:#111">3e-06</div><div class="a t" style="left:725.5px;width:120px;text-align:center;top:386px;font-family:'Liberation Sans';font-size:12.5px;line-height:16px;color:#111">3.2e-06</div><div class="a t" style="left:489px;width:200px;text-align:center;top:400px;font-family:'Liberation Sans';font-size:16.5px;line-height:20px;color:#111">lambda</div>
<div class="a" style="left:815px;top:-10px;width:294px;height:173px;border:1px solid #dadada;border-top:none"></div>
<div class="a t" style="left:827px;top:-8.50px;font-family:'Liberation Mono', monospace;font-size:15px;line-height:15px;color:#000;transform:scaleY(1.18);transform-origin:0 11.50px;">Plot types</div>
<svg style="left:828px;top:22px" width="22" height="22" viewBox="0 0 22 22"><circle cx="11" cy="11" r="10" fill="#005fb8"/><circle cx="11" cy="11" r="4.3" fill="#fff"/></svg>
<svg style="left:828px;top:57.8px" width="22" height="22" viewBox="0 0 22 22"><circle cx="11" cy="11" r="9.5" fill="#f9f9f9" stroke="#a8a8a8" stroke-width="1"/></svg>
<svg style="left:828px;top:93.8px" width="22" height="22" viewBox="0 0 22 22"><circle cx="11" cy="11" r="9.5" fill="#f9f9f9" stroke="#a8a8a8" stroke-width="1"/></svg>
<svg style="left:828px;top:127.9px" width="22" height="22" viewBox="0 0 22 22"><circle cx="11" cy="11" r="9.5" fill="#f9f9f9" stroke="#a8a8a8" stroke-width="1"/></svg>
<div class="a t" style="left:858px;top:27.60px;font-family:'Liberation Mono', monospace;font-size:15px;line-height:15px;color:#000;transform:scaleY(1.18);transform-origin:0 11.50px;">Line</div>
<div class="a t" style="left:858px;top:63.30px;font-family:'Liberation Mono', monospace;font-size:15px;line-height:15px;color:#8a8a8a;transform:scaleY(1.18);transform-origin:0 11.50px;">Image</div>
<div class="a t" style="left:858px;top:99.30px;font-family:'Liberation Mono', monospace;font-size:15px;line-height:15px;color:#8a8a8a;transform:scaleY(1.18);transform-origin:0 11.50px;">Surface</div>
<div class="a t" style="left:858px;top:132.90px;font-family:'Liberation Mono', monospace;font-size:15px;line-height:15px;color:#8a8a8a;transform:scaleY(1.18);transform-origin:0 11.50px;">Vector</div>
<div class="a" style="left:934px;top:20px;width:161px;height:26px;background:#fff;border:1px solid #d0d0d0;border-bottom:1px solid #9a9a9a;border-radius:3px"></div>
<div class="a t" style="left:939px;top:29.00px;font-family:'Liberation Mono', monospace;font-size:15px;line-height:15px;color:#000;transform:scaleY(1.18);transform-origin:0 11.50px;">xy plot</div>
<svg style="left:1076px;top:30.5px" width="12" height="7" viewBox="0 0 12 7"><path d="M0.6 0.6 L6 6 L11.4 0.6" fill="none" stroke="#333" stroke-width="1.3"/></svg>
<div class="a" style="left:934px;top:57px;width:161px;height:25px;background:#f9f9f9;border:1px solid #ececec;border-radius:3px"></div>
<div class="a t" style="left:939px;top:64.50px;font-family:'Liberation Mono', monospace;font-size:15px;line-height:15px;color:#8a8a8a;transform:scaleY(1.18);transform-origin:0 11.50px;">xy plot</div>
<svg style="left:1076px;top:67.5px" width="12" height="7" viewBox="0 0 12 7"><path d="M0.6 0.6 L6 6 L11.4 0.6" fill="none" stroke="#a0a0a0" stroke-width="1.3"/></svg>
<div class="a" style="left:934px;top:93px;width:161px;height:25px;background:#f9f9f9;border:1px solid #ececec;border-radius:3px"></div>
<div class="a t" style="left:939px;top:100.50px;font-family:'Liberation Mono', monospace;font-size:15px;line-height:15px;color:#8a8a8a;transform:scaleY(1.18);transform-origin:0 11.50px;">xyz plot</div>
<svg style="left:1076px;top:103.5px" width="12" height="7" viewBox="0 0 12 7"><path d="M0.6 0.6 L6 6 L11.4 0.6" fill="none" stroke="#a0a0a0" stroke-width="1.3"/></svg>
<div class="a" style="left:815px;top:182px;width:294px;height:243px;border:1px solid #dadada"></div>
<div class="a" style="left:824px;top:175px;width:122px;height:14px;background:#f0f0f0"></div>
<div class="a t" style="left:827px;top:176.90px;font-family:'Liberation Mono', monospace;font-size:15px;line-height:15px;color:#000;transform:scaleY(1.18);transform-origin:0 11.50px;">Plot settings</div>
<div class="a" style="left:831px;top:207px;width:35px;height:24px;background:#f8f8f8;border-radius:4px"></div><svg style="left:831px;top:207px" width="35" height="24" viewBox="0 0 35 24"><path d="M5 0 L25.5 0 L29 3.5 L29 24 L8.5 24 L5 20.5 Z" fill="#8a8a8a"/><text x="6" y="18.8" font-family="Liberation Sans" font-size="18" font-weight="700" fill="#fff" textLength="22" lengthAdjust="spacingAndGlyphs">XY</text></svg><div class="a" style="left:879px;top:207px;width:35px;height:24px;background:#f8f8f8;border-radius:4px"></div><svg style="left:879px;top:207px" width="35" height="24" viewBox="0 0 35 24"><path d="M5 0 L25.5 0 L29 3.5 L29 24 L8.5 24 L5 20.5 Z" fill="#8a8a8a"/><text x="6" y="18.8" font-family="Liberation Sans" font-size="18" font-weight="700" fill="#fff" textLength="22" lengthAdjust="spacingAndGlyphs">XZ</text></svg><div class="a" style="left:927px;top:207px;width:35px;height:24px;background:#f8f8f8;border-radius:4px"></div><svg style="left:927px;top:207px" width="35" height="24" viewBox="0 0 35 24"><path d="M5 0 L25.5 0 L29 3.5 L29 24 L8.5 24 L5 20.5 Z" fill="#8a8a8a"/><text x="6" y="18.8" font-family="Liberation Sans" font-size="18" font-weight="700" fill="#fff" textLength="22" lengthAdjust="spacingAndGlyphs">YZ</text></svg><div class="a" style="left:975px;top:207px;width:35px;height:24px;background:#f8f8f8;border-radius:4px"></div><svg style="left:975px;top:207px" width="35" height="24" viewBox="0 0 35 24"><path d="M5 0 L25.5 0 L29 3.5 L29 24 L8.5 24 L5 20.5 Z" fill="#8a8a8a"/><path d="M10 11.5 L10 8 C10 1.5 24.5 1.5 24.5 7 L24.5 8" fill="none" stroke="#fff" stroke-width="2.2"/><rect x="8.3" y="12" width="17" height="9.5" rx="2.5" fill="none" stroke="#fff" stroke-width="2.2"/></svg>
<div class="a" style="left:829px;top:244px;width:20px;height:20px;background:#c6c6c6;border-radius:3px"></div>
<svg style="left:829px;top:244px" width="20" height="20" viewBox="0 0 20 20"><path d="M5.5 10.2 L8.6 13.2 L14.5 7" fill="none" stroke="#f4f4f4" stroke-width="1.2"/></svg>
<div class="a t" style="left:857px;top:249.90px;font-family:'Liberation Mono', monospace;font-size:15px;line-height:15px;color:#8a8a8a;transform:scaleY(1.18);transform-origin:0 11.50px;">Show axes</div>
<div class="a" style="left:829px;top:280px;width:20px;height:20px;background:#f5f5f5;border:1px solid #444;border-radius:3px"></div>
<div class="a t" style="left:857px;top:285.90px;font-family:'Liberation Mono', monospace;font-size:15px;line-height:15px;color:#000;transform:scaleY(1.18);transform-origin:0 11.50px;">Hold Camera</div>
<div class="a" style="left:829px;top:316px;width:20px;height:20px;background:#f5f5f5;border:1px solid #444;border-radius:3px"></div>
<div class="a t" style="left:857px;top:321.90px;font-family:'Liberation Mono', monospace;font-size:15px;line-height:15px;color:#000;transform:scaleY(1.18);transform-origin:0 11.50px;">Lock Color Bar</div>
<div class="a" style="left:830px;top:350px;width:127px;height:25px;background:#fdfdfd;border:1px solid #d0d0d0;border-bottom-color:#a8a8a8;border-radius:3px"></div>
<div class="a t" style="left:866.5px;top:358.00px;font-family:'Liberation Mono', monospace;font-size:15px;line-height:15px;color:#000;transform:scaleY(1.18);transform-origin:0 11.50px;">Redraw</div>
<div class="a" style="left:967px;top:352px;width:20px;height:20px;background:#005fb8;border-radius:3px"></div>
<svg style="left:967px;top:352px" width="20" height="20" viewBox="0 0 20 20"><path d="M5.5 10.2 L8.6 13.2 L14.5 7" fill="none" stroke="#fff" stroke-width="1.2"/></svg>
<div class="a t" style="left:995px;top:357.90px;font-family:'Liberation Mono', monospace;font-size:15px;line-height:15px;color:#000;transform:scaleY(1.18);transform-origin:0 11.50px;">Auto</div>
<div class="a" style="left:830px;top:386px;width:264px;height:25px;background:#fdfdfd;border:1px solid #d0d0d0;border-bottom-color:#a8a8a8;border-radius:3px"></div>
<div class="a t" style="left:881.0px;top:394.00px;font-family:'Liberation Mono', monospace;font-size:15px;line-height:15px;color:#000;transform:scaleY(1.18);transform-origin:0 11.50px;">Plot in New Window</div>
<div class="a" style="left:342px;top:434px;width:766px;height:27px;background:#e1e1e1"></div>
<svg style="left:670px;top:443px" width="16" height="10" viewBox="0 0 16 10"><path d="M0.5 0.3 L15.5 0.3 L8 9.8 Z" fill="#000"/></svg>
<div class="a t" style="left:694px;top:442.50px;font-family:'Liberation Mono', monospace;font-size:15px;line-height:15px;color:#000;transform:scaleY(1.18);transform-origin:0 11.50px;">Attributes</div>
<div class="a" style="left:355px;top:474px;width:591px;height:146px;background:#f0f0f0;border:1px solid #828790"></div>
<div class="a" style="left:356px;top:475px;width:6px;height:36px;background:#fff"></div>
<div class="a" style="left:362px;top:475px;width:583px;height:36px;background:#bcdcf4"></div>
<div class="a" style="left:356px;top:511px;width:6px;height:39px;background:#bcdcf4"></div>
<div class="a" style="left:362px;top:511px;width:583px;height:39px;background:#3399ff"></div>
<div class="a" style="left:362px;top:550px;width:583px;height:43px;background:#fff"></div>
<div class="a" style="left:356px;top:550px;width:6px;height:43px;background:#f0f0f0"></div>
<div class="a" style="left:521px;top:511px;width:1px;height:39px;background:#b5d8fa"></div>
<div class="a" style="left:681px;top:511px;width:1px;height:39px;background:#b5d8fa"></div>
<div class="a" style="left:766px;top:511px;width:1px;height:39px;background:#b5d8fa"></div>
<div class="a" style="left:851px;top:511px;width:1px;height:39px;background:#b5d8fa"></div>
<div class="a" style="left:936px;top:511px;width:1px;height:39px;background:#b5d8fa"></div>
<div class="a" style="left:382px;top:601px;width:174px;height:11px;background:#878787"></div>
<div class="a t" style="left:407px;top:483.86px;font-family:'Liberation Sans', sans-serif;font-size:18px;line-height:18px;color:#000;font-weight:700;">Data set</div>
<div class="a t" style="left:563px;top:483.86px;font-family:'Liberation Sans', sans-serif;font-size:18px;line-height:18px;color:#000;font-weight:700;">Attribute</div>
<div class="a" style="left:688px;top:483.86px;width:73px;height:28.8px;overflow:hidden"><div class="a t" style="left:-4px;top:0px;font-family:'Liberation Sans', sans-serif;font-size:18px;line-height:18px;color:#000;font-weight:700;">tor operat</div></div>
<div class="a" style="left:773px;top:483.86px;width:72px;height:28.8px;overflow:hidden"><div class="a t" style="left:1px;top:0px;font-family:'Liberation Sans', sans-serif;font-size:18px;line-height:18px;color:#000;font-weight:700;">ar operat</div></div>
<div class="a t" style="left:871px;top:483.86px;font-family:'Liberation Sans', sans-serif;font-size:18px;line-height:18px;color:#000;font-weight:700;">Scale</div>
<div class="a t" style="left:364px;top:524.57px;font-family:'Liberation Sans', sans-serif;font-size:13.5px;line-height:13.5px;color:#fff;">Pabs:Pabs_total</div>
<div class="a t" style="left:524px;top:524.57px;font-family:'Liberation Sans', sans-serif;font-size:13.5px;line-height:13.5px;color:#fff;">Pabs_total</div>
<div class="a t" style="left:685px;top:514.57px;font-family:'Liberation Sans', sans-serif;font-size:13.5px;line-height:13.5px;color:#fff;">Not</div>
<div class="a t" style="left:685px;top:533.57px;font-family:'Liberation Sans', sans-serif;font-size:13.5px;line-height:13.5px;color:#fff;">Applicable</div>
<div class="a t" style="left:769px;top:524.57px;font-family:'Liberation Sans', sans-serif;font-size:13.5px;line-height:13.5px;color:#fff;">Re</div>
<div class="a t" style="left:854px;top:524.57px;font-family:'Liberation Sans', sans-serif;font-size:13.5px;line-height:13.5px;color:#fff;">(1e0)</div>
<div class="a" style="left:937px;top:524.57px;width:8px;height:21.6px;overflow:hidden"><div class="a t" style="left:2px;top:0px;font-family:'Liberation Sans', sans-serif;font-size:13.5px;line-height:13.5px;color:#fff;">Re</div></div>
<div class="a" style="left:955px;top:474px;width:140px;height:145px;border:1px solid #dadada"></div>
<div class="a" style="left:970px;top:489px;width:110px;height:26px;background:#fdfdfd;border:1px solid #d0d0d0;border-bottom-color:#a8a8a8;border-radius:3px"></div>
<div class="a t" style="left:984.5px;top:497.50px;font-family:'Liberation Mono', monospace;font-size:15px;line-height:15px;color:#000;transform:scaleY(1.18);transform-origin:0 11.50px;">Duplicate</div>
<div class="a" style="left:970px;top:526px;width:110px;height:26px;background:#fdfdfd;border:1px solid #d0d0d0;border-bottom-color:#a8a8a8;border-radius:3px"></div>
<div class="a t" style="left:998.0px;top:534.50px;font-family:'Liberation Mono', monospace;font-size:15px;line-height:15px;color:#000;transform:scaleY(1.18);transform-origin:0 11.50px;">Remove</div>
<div class="a" style="left:342px;top:642px;width:766px;height:27px;background:#e1e1e1"></div>
<svg style="left:670px;top:651px" width="16" height="10" viewBox="0 0 16 10"><path d="M0.5 0.3 L15.5 0.3 L8 9.8 Z" fill="#000"/></svg>
<div class="a t" style="left:694px;top:650.50px;font-family:'Liberation Mono', monospace;font-size:15px;line-height:15px;color:#000;transform:scaleY(1.18);transform-origin:0 11.50px;">Parameters</div>
<div class="a" style="left:355px;top:682px;width:323px;height:200px;background:#fff;border:1px solid #828790"></div>
<div class="a" style="left:356px;top:683px;width:6px;height:36px;background:#fff"></div>
<div class="a" style="left:362px;top:683px;width:315px;height:36px;background:#bcdcf4"></div>
<div class="a" style="left:356px;top:719px;width:6px;height:39px;background:#bcdcf4"></div>
<div class="a" style="left:362px;top:719px;width:315px;height:39px;background:#3399ff"></div>
<div class="a" style="left:356px;top:758px;width:6px;height:120px;background:#f0f0f0"></div>
<div class="a" style="left:491px;top:719px;width:1px;height:39px;background:#b5d8fa"></div>
<div class="a" style="left:621px;top:719px;width:1px;height:39px;background:#b5d8fa"></div>
<div class="a t" style="left:377px;top:692.26px;font-family:'Liberation Sans', sans-serif;font-size:18px;line-height:18px;color:#000;font-weight:700;">Attribute(s)</div>
<div class="a t" style="left:512px;top:692.26px;font-family:'Liberation Sans', sans-serif;font-size:18px;line-height:18px;color:#000;font-weight:700;">Parameter</div>
<div class="a" style="left:600px;top:692.26px;width:77px;height:28.8px;overflow:hidden"><div class="a t" style="left:28px;top:0px;font-family:'Liberation Sans', sans-serif;font-size:18px;line-height:18px;color:#000;font-weight:700;">Action</div></div>
<div class="a t" style="left:364px;top:722.57px;font-family:'Liberation Sans', sans-serif;font-size:13.5px;line-height:13.5px;color:#fff;">Pabs:Pabs_total</div>
<div class="a t" style="left:364px;top:740.97px;font-family:'Liberation Sans', sans-serif;font-size:13.5px;line-height:13.5px;color:#fff;">(Pabs_total)</div>
<div class="a t" style="left:494px;top:731.57px;font-family:'Liberation Sans', sans-serif;font-size:13.5px;line-height:13.5px;color:#fff;">lambda</div>
<div class="a" style="left:600px;top:731.57px;width:77px;height:21.6px;overflow:hidden"><div class="a t" style="left:24px;top:0px;font-family:'Liberation Sans', sans-serif;font-size:13.5px;line-height:13.5px;color:#fff;">Plot x axis</div></div>
<div class="a" style="left:677px;top:683px;width:1px;height:200px;background:#828790"></div>
<div class="a" style="left:678px;top:683px;width:7px;height:200px;background:#f0f0f0"></div>
<div class="a" style="left:685px;top:682px;width:410px;height:200px;border:1px solid #dadada"></div>
<div class="a t" style="left:702px;top:708.10px;font-family:'Liberation Mono', monospace;font-size:15px;line-height:15px;color:#000;transform:scaleY(1.18);transform-origin:0 11.50px;">Label</div>
<div class="a t" style="left:702px;top:745.10px;font-family:'Liberation Mono', monospace;font-size:15px;line-height:15px;color:#000;transform:scaleY(1.18);transform-origin:0 11.50px;">Axis min</div>
<div class="a t" style="left:702px;top:782.10px;font-family:'Liberation Mono', monospace;font-size:15px;line-height:15px;color:#000;transform:scaleY(1.18);transform-origin:0 11.50px;">Axis max</div>
<div class="a t" style="left:702px;top:819.10px;font-family:'Liberation Mono', monospace;font-size:15px;line-height:15px;color:#000;transform:scaleY(1.18);transform-origin:0 11.50px;">Units</div>
<div class="a" style="left:784px;top:700px;width:293px;height:27px;background:#fff;border:1px solid #e0e0e0;border-bottom:1px solid #8a8a8a;border-radius:2px"></div>
<div class="a t" style="left:785.5px;top:708.10px;font-family:'Liberation Mono', monospace;font-size:15px;line-height:15px;color:#000;transform:scaleY(1.18);transform-origin:0 11.50px;">lambda</div>
<div class="a" style="left:784px;top:737px;width:293px;height:27px;background:#fff;border:1px solid #e0e0e0;border-bottom:1px solid #8a8a8a;border-radius:2px"></div>
<div class="a t" style="left:785.5px;top:745.10px;font-family:'Liberation Mono', monospace;font-size:15px;line-height:15px;color:#000;transform:scaleY(1.18);transform-origin:0 11.50px;">2e-06</div>
<div class="a" style="left:784px;top:774px;width:293px;height:27px;background:#fff;border:1px solid #e0e0e0;border-bottom:1px solid #8a8a8a;border-radius:2px"></div>
<div class="a t" style="left:785.5px;top:782.10px;font-family:'Liberation Mono', monospace;font-size:15px;line-height:15px;color:#000;transform:scaleY(1.18);transform-origin:0 11.50px;">3e-06</div>
<div class="a" style="left:783px;top:810px;width:149px;height:27px;background:#fdfdfd;border:1px solid #d0d0d0;border-bottom-color:#a0a0a0;border-radius:3px"></div>
<div class="a t" style="left:789px;top:818.50px;font-family:'Liberation Mono', monospace;font-size:15px;line-height:15px;color:#000;transform:scaleY(1.18);transform-origin:0 11.50px;">(1e0)</div>
<svg style="left:913px;top:820px" width="12" height="7" viewBox="0 0 12 7"><path d="M0.6 0.6 L6 6 L11.4 0.6" fill="none" stroke="#333" stroke-width="1.3"/></svg>
<div class="a" style="left:942px;top:810px;width:126px;height:27px;background:#fdfdfd;border:1px solid #d0d0d0;border-bottom-color:#a0a0a0;border-radius:3px"></div>
<svg style="left:1050px;top:820px" width="12" height="7" viewBox="0 0 12 7"><path d="M0.6 0.6 L6 6 L11.4 0.6" fill="none" stroke="#333" stroke-width="1.3"/></svg>
</body></html>
